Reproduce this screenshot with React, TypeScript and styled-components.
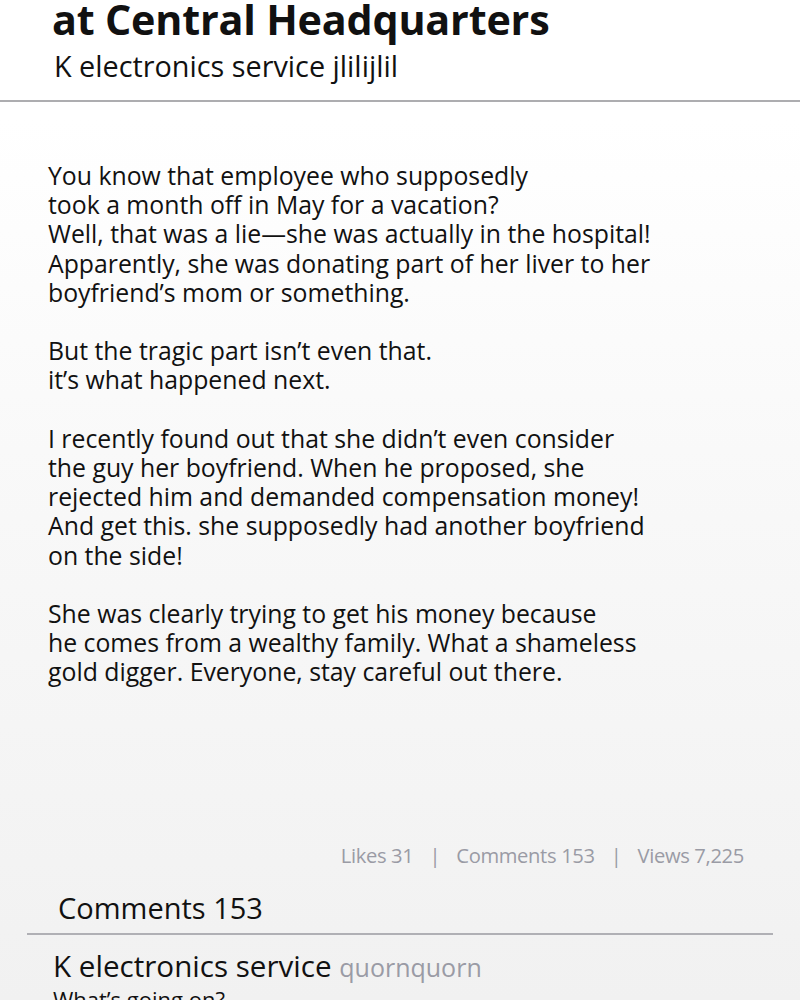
import React from 'react';
import styled, { createGlobalStyle } from 'styled-components';

const GlobalStyle = createGlobalStyle`
  html, body {
    margin: 0;
    padding: 0;
    background: #f2f2f2;
  }
  body {
    font-family: 'Open Sans', 'Noto Sans', sans-serif;
    color: #111;
  }
`;

const Page = styled.div`
  width: 800px;
  height: 1000px;
  overflow: hidden;
  background: linear-gradient(to bottom, #ffffff 0%, #ffffff 12%, #f9f9f9 45%, #f1f1f1 100%);
`;

const Header = styled.header`
  padding: 0 0 16px 52px;
  border-bottom: 2px solid #adadb0;
  background: #fff;
`;

const Title = styled.h1`
  margin: -6px 0 0 0;
  font-size: 41.3px;
  font-weight: 700;
  line-height: 50px;
  letter-spacing: -0.2px;
`;

const Subtitle = styled.div`
  margin: 4px 0 0 2px;
  font-size: 28.8px;
  line-height: 36px;
`;

const Body = styled.article`
  padding: 59px 48px 0 48px;
  height: 739px;
  box-sizing: border-box;
`;

const Paragraph = styled.p`
  margin: 0 0 29.2px 0;
  font-size: 24.8px;
  line-height: 29.2px;
  white-space: pre-line;
`;

const Stats = styled.div`
  display: flex;
  justify-content: flex-end;
  gap: 16px;
  padding: 0 56px 0 0;
  font-size: 20.2px;
  line-height: 28px;
  letter-spacing: -0.35px;
  color: #9a9ba5;
`;

const Divider = styled.span`
  color: #9a9ba5;
`;

const CommentsHeader = styled.h2`
  margin: 19px 27px 0 27px;
  padding: 0 0 5px 31px;
  font-size: 29px;
  font-weight: 400;
  line-height: 40px;
  border-bottom: 2px solid #b0b0b5;
`;

const Comment = styled.div`
  padding: 13px 0 0 53px;
`;

const Author = styled.div`
  font-size: 29.6px;
  line-height: 36px;
`;

const Handle = styled.span`
  font-size: 25px;
  color: #9a9ba5;
`;

const CommentText = styled.div`
  font-size: 22px;
  line-height: 28px;
`;

const paragraphs = [
  `You know that employee who supposedly
took a month off in May for a vacation?
Well, that was a lie\u2014she was actually in the hospital!
Apparently, she was donating part of her liver to her
boyfriend\u2019s mom or something.`,
  `But the tragic part isn\u2019t even that.
it\u2019s what happened next.`,
  `I recently found out that she didn\u2019t even consider
the guy her boyfriend. When he proposed, she
rejected him and demanded compensation money!
And get this. she supposedly had another boyfriend
on the side!`,
  `She was clearly trying to get his money because
he comes from a wealthy family. What a shameless
gold digger. Everyone, stay careful out there.`,
];

const App: React.FC = () => {
  return (
    <Page>
      <GlobalStyle />
      <Header>
        <Title>at Central Headquarters</Title>
        <Subtitle>K electronics service jlilijlil</Subtitle>
      </Header>

      <Body>
        {paragraphs.map((p, i) => (
          <Paragraph key={i}>{p}</Paragraph>
        ))}
      </Body>

      <Stats>
        <span>Likes 31</span>
        <Divider>|</Divider>
        <span>Comments 153</span>
        <Divider>|</Divider>
        <span>Views 7,225</span>
      </Stats>

      <CommentsHeader>Comments 153</CommentsHeader>

      <Comment>
        <Author>
          K electronics service <Handle>quornquorn</Handle>
        </Author>
        <CommentText>{'What\u2019s going on?'}</CommentText>
      </Comment>
    </Page>
  );
};

export default App;
